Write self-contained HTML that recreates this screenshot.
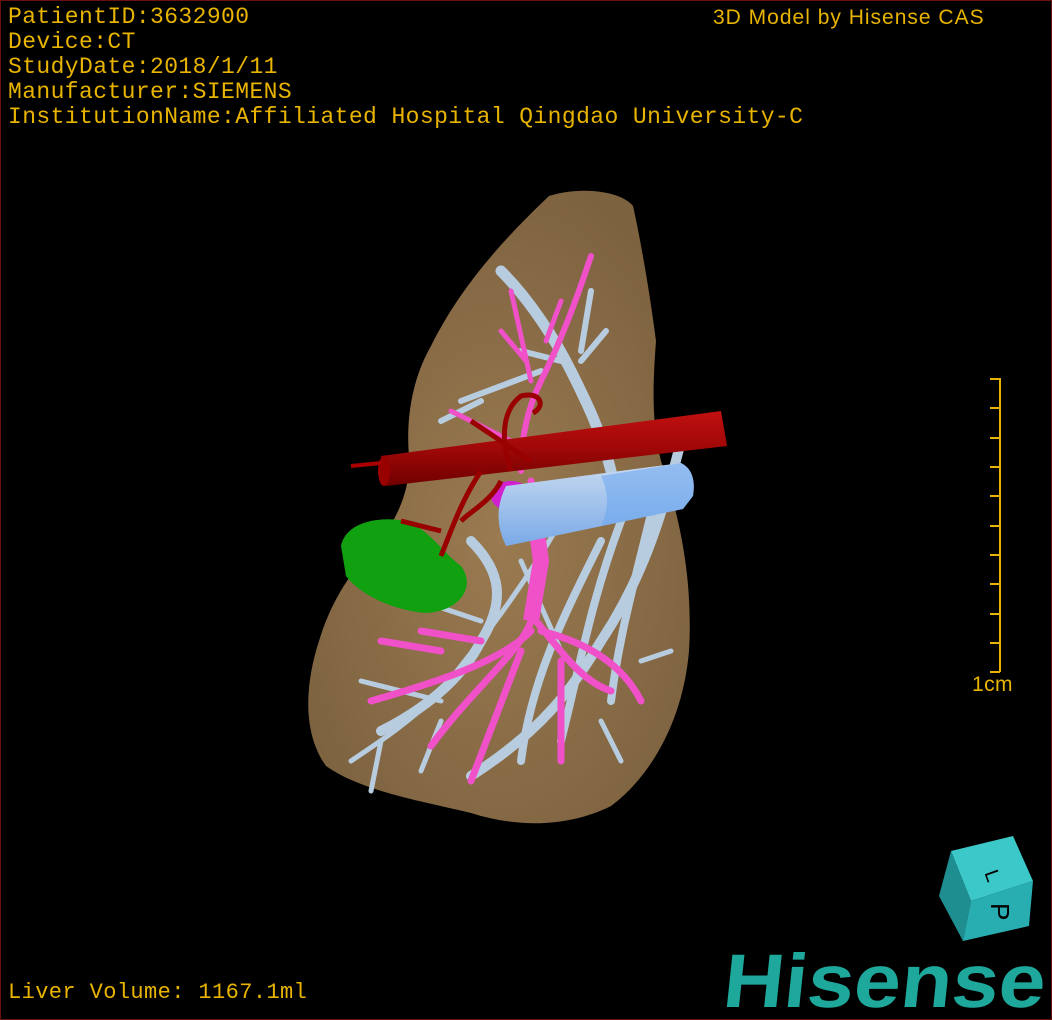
<!DOCTYPE html>
<html><head><meta charset="utf-8"><style>
html,body{margin:0;padding:0;background:#000;}
#c{position:relative;width:1050px;height:1018px;border:1px solid #6a1010;overflow:hidden;background:#000;}
.t{position:absolute;left:7px;color:#e8b400;font-family:"Liberation Mono",monospace;font-size:23px;line-height:25px;white-space:pre;letter-spacing:0.4px;}
</style></head><body><div id="c">
<div class="t" style="top:4px">PatientID:3632900
Device:CT
StudyDate:2018/1/11
Manufacturer:SIEMENS
InstitutionName:Affiliated Hospital Qingdao University-C</div>
<div class="t" style="top:4px;left:712px;font-family:'Liberation Sans',sans-serif;font-size:21px;letter-spacing:1px">3D Model by Hisense CAS</div>
<div class="t" style="top:979px;font-family:'Liberation Mono',monospace;font-size:22px">Liver Volume: 1167.1ml</div>
<div class="t" style="top:671px;left:971px;font-family:'Liberation Sans',sans-serif;font-size:21px">1cm</div>
<svg width="1050" height="1018" style="position:absolute;left:0;top:0">
<defs>
<radialGradient id="lv" cx="0.5" cy="0.55" r="0.6"><stop offset="0" stop-color="#9a7a50"/><stop offset="1" stop-color="#7d6240"/></radialGradient>
<linearGradient id="rd" x1="0" y1="0" x2="0" y2="1"><stop offset="0" stop-color="#c01010"/><stop offset="0.5" stop-color="#a00808"/><stop offset="1" stop-color="#700000"/></linearGradient>
<linearGradient id="bl" x1="0" y1="0" x2="0" y2="1"><stop offset="0" stop-color="#c8daf0"/><stop offset="1" stop-color="#7aaae8"/></linearGradient>
</defs>
<path d="M548,195 C580,185 620,190 632,205 C640,240 650,300 655,340 C652,380 650,420 660,460 C680,520 692,580 688,650 C682,720 650,775 610,805 C570,825 520,828 470,812 C420,800 360,790 325,765 C300,730 305,680 318,640 C330,600 350,570 375,545 C395,520 410,490 408,455 C405,420 410,380 430,345 C455,295 490,250 548,195 Z" fill="url(#lv)"/>
<g stroke="#b8cce0" fill="none" stroke-linecap="round">
<path d="M500,270 C530,300 555,340 570,370 C585,400 600,430 610,470" stroke-width="11"/>
<path d="M590,290 L580,350 M540,320 L570,370 M520,350 L560,360 M460,400 L540,370 M440,420 L480,400 M580,360 L605,330" stroke-width="6"/>
<path d="M470,540 C500,570 505,600 480,640 C460,680 420,710 380,730" stroke-width="10"/>
<path d="M680,440 C660,520 640,580 600,640 C570,690 540,730 470,775" stroke-width="10"/>
<path d="M660,470 C640,560 620,620 610,700 M620,520 C590,600 580,660 560,740 M600,540 C560,620 530,680 520,760" stroke-width="8"/>
<path d="M560,520 C520,590 480,640 440,690 C410,720 380,740 350,760 M420,600 L480,620 M360,680 L440,700 M520,560 L560,650 M640,660 L670,650 M600,720 L620,760 M440,720 L420,770 M380,740 L370,790" stroke-width="5"/>
</g>
<g stroke="#f050c8" fill="none" stroke-linecap="round">
<path d="M590,255 C575,300 560,340 540,380 C525,410 520,440 520,470" stroke-width="6"/>
<path d="M510,290 L530,380 M500,330 L525,360 M450,410 L510,440 M560,300 L545,340" stroke-width="5"/>
<path d="M530,480 C535,530 545,570 530,620 C520,650 470,690 430,745 M535,620 C560,650 580,680 610,690 M530,630 C500,660 440,680 370,700 M540,630 C580,640 620,660 640,700 M520,650 L470,780 M560,660 L560,760 M420,630 L480,640 M380,640 L440,650" stroke-width="7"/>
</g>
<path d="M530,490 L540,560 L530,620" stroke="#f050c8" stroke-width="16" fill="none"/>
<ellipse cx="510" cy="495" rx="20" ry="15" fill="#d020d0"/>
<path d="M340,545 C345,520 380,515 405,520 C430,530 440,550 460,565 C475,585 460,610 425,612 C395,610 360,595 345,575 Z" fill="#10a010"/>
<path d="M505,485 L680,462 Q696,470 692,495 L682,508 L505,545 Q490,515 505,485 Z" fill="url(#bl)"/>
<path d="M600,475 L680,462 Q696,470 692,495 L682,508 L600,525 Q612,500 600,475 Z" fill="#6aa6f0" opacity="0.55"/>
<path d="M380,455 L720,410 L726,445 L385,485 Z" fill="url(#rd)"/>
<ellipse cx="383" cy="470" rx="6" ry="15" fill="#900"/>
<path d="M350,465 L380,462" stroke="#a00" stroke-width="4"/>
<g stroke="#900" fill="none" stroke-width="5">
<path d="M510,470 C500,440 500,410 520,395 C540,390 545,405 532,412"/>
<path d="M470,420 L530,460 M480,470 C460,500 450,530 440,555 M400,520 L440,530 M500,480 C490,500 470,510 460,520"/>
</g>
<g stroke="#e8b400" stroke-width="2">
<line x1="999" y1="377" x2="999" y2="671"/>
<path d="M989,378H999M989,407H999M989,437H999M989,466H999M989,495H999M989,525H999M989,554H999M989,583H999M989,613H999M989,642H999M989,671H999"/>
</g>
<path d="M950,850 L1012,835 L1032,880 L970,900 Z" fill="#3cc8c8"/>
<path d="M950,850 L970,900 L962,940 L938,895 Z" fill="#1f8e90"/>
<path d="M970,900 L1032,880 L1028,925 L962,940 Z" fill="#28adb0"/>
<text x="988" y="875" font-family="Liberation Sans" font-size="20" fill="#000" transform="rotate(70 988 870)">L</text>
<text x="992" y="920" font-family="Liberation Sans" font-size="26" fill="#000" transform="rotate(90 1000 910)">P</text>
<g transform="translate(0,0) skewX(-6)">
<text x="826" y="1006" font-family="Liberation Sans" font-weight="bold" font-size="76" fill="#1ea89c" textLength="322" lengthAdjust="spacingAndGlyphs">Hisense</text>
</g>
</svg>
</div></body></html>
